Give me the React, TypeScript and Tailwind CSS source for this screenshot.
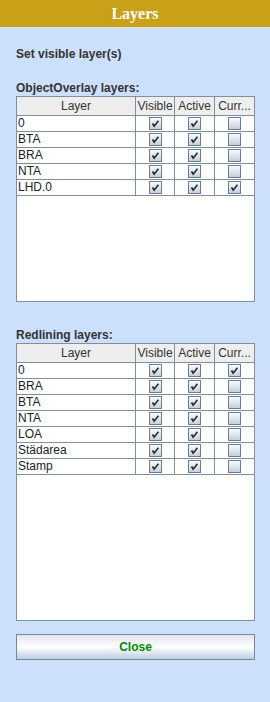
import React from "react";

type Row = { name: string; visible: boolean; active: boolean; current: boolean };

const overlayRows: Row[] = [
  { name: "0", visible: true, active: true, current: false },
  { name: "BTA", visible: true, active: true, current: false },
  { name: "BRA", visible: true, active: true, current: false },
  { name: "NTA", visible: true, active: true, current: false },
  { name: "LHD.0", visible: true, active: true, current: true },
];

const redliningRows: Row[] = [
  { name: "0", visible: true, active: true, current: true },
  { name: "BRA", visible: true, active: true, current: false },
  { name: "BTA", visible: true, active: true, current: false },
  { name: "NTA", visible: true, active: true, current: false },
  { name: "LOA", visible: true, active: true, current: false },
  { name: "Städarea", visible: true, active: true, current: false },
  { name: "Stamp", visible: true, active: true, current: false },
];

function CheckBox({ checked }: { checked: boolean }) {
  return (
    <div className="w-[13px] h-[13px] border border-[#6c7d8f] bg-gradient-to-b from-[#fbfcfd] to-[#c3d0dd] flex items-center justify-center">
      {checked && (
        <svg width="11" height="11" viewBox="0 0 11 11">
          <path d="M2.5 5.5 L4.2 8.2 L8.5 2.8" fill="none" stroke="#2a2a2a" strokeWidth="1.6" />
          <path d="M2.6 6 L4 8.4 L4.6 7.2 L3.4 5.4 Z" fill="#2a2a2a" />
        </svg>
      )}
    </div>
  );
}

function LayerTable({ rows, height }: { rows: Row[]; height: string }) {
  return (
    <div className={`${height} w-[239px] border border-[#7f8fa0] bg-white text-[12px] text-[#222]`}>
      <div className="flex h-[19px] border-b border-[#7f8fa0] bg-[#eeeeee] text-[#333] leading-[18px]">
        <div className="w-[119px] border-r border-[#7f8fa0] text-center">Layer</div>
        <div className="w-[39px] border-r border-[#7f8fa0] text-center overflow-hidden whitespace-nowrap">Visible</div>
        <div className="w-[40px] border-r border-[#7f8fa0] text-center">Active</div>
        <div className="flex-1 text-center">Curr...</div>
      </div>
      {rows.map((r) => (
        <div key={r.name} className="flex h-[16px] border-b border-[#7f8fa0] leading-[15px]">
          <div className="w-[119px] border-r border-[#7f8fa0] pl-[1px]">{r.name}</div>
          <div className="w-[39px] border-r border-[#7f8fa0] flex items-center justify-center">
            <CheckBox checked={r.visible} />
          </div>
          <div className="w-[40px] border-r border-[#7f8fa0] flex items-center justify-center">
            <CheckBox checked={r.active} />
          </div>
          <div className="flex-1 flex items-center justify-center">
            <CheckBox checked={r.current} />
          </div>
        </div>
      ))}
    </div>
  );
}

export default function App() {
  return (
    <div className="w-[270px] h-[702px] bg-[#cde0fb] font-['Liberation_Sans',Arial,sans-serif]">
      <div className="h-[27px] bg-[#c8a117] flex items-center justify-center text-white font-bold text-[16px] font-['Liberation_Serif',serif]">
        Layers
      </div>
      <div className="px-[16px]">
        <div className="mt-[20px] h-[14px] leading-[14px] text-[12px] font-bold text-[#333]">
          Set visible layer(s)
        </div>
        <div className="mt-[20px] h-[15px] leading-[15px] text-[12px] font-bold text-[#333]">
          ObjectOverlay layers:
        </div>
        <LayerTable rows={overlayRows} height="h-[206px]" />
        <div className="mt-[26px] h-[15px] leading-[15px] text-[12px] font-bold text-[#333]">
          Redlining layers:
        </div>
        <LayerTable rows={redliningRows} height="h-[278px]" />
        <button className="mt-[13px] w-[239px] h-[26px] border border-[#75869a] bg-gradient-to-b from-[#dfe6ee] via-[#ffffff] to-[#bccddf] text-[#008a00] font-bold text-[12px]">
          Close
        </button>
      </div>
    </div>
  );
}
